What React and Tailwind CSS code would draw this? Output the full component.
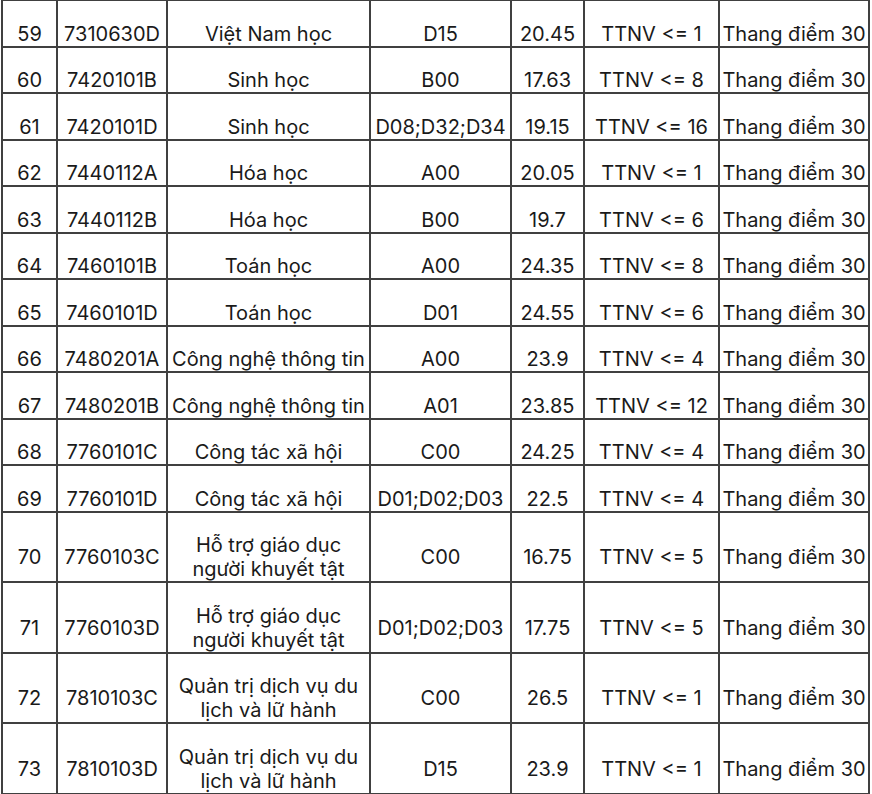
const rows = [
  ['59', '7310630D', ['Việt Nam học'], 'D15', '20.45', 'TTNV <= 1'],
  ['60', '7420101B', ['Sinh học'], 'B00', '17.63', 'TTNV <= 8'],
  ['61', '7420101D', ['Sinh học'], 'D08;D32;D34', '19.15', 'TTNV <= 16'],
  ['62', '7440112A', ['Hóa học'], 'A00', '20.05', 'TTNV <= 1'],
  ['63', '7440112B', ['Hóa học'], 'B00', '19.7', 'TTNV <= 6'],
  ['64', '7460101B', ['Toán học'], 'A00', '24.35', 'TTNV <= 8'],
  ['65', '7460101D', ['Toán học'], 'D01', '24.55', 'TTNV <= 6'],
  ['66', '7480201A', ['Công nghệ thông tin'], 'A00', '23.9', 'TTNV <= 4'],
  ['67', '7480201B', ['Công nghệ thông tin'], 'A01', '23.85', 'TTNV <= 12'],
  ['68', '7760101C', ['Công tác xã hội'], 'C00', '24.25', 'TTNV <= 4'],
  ['69', '7760101D', ['Công tác xã hội'], 'D01;D02;D03', '22.5', 'TTNV <= 4'],
  ['70', '7760103C', ['Hỗ trợ giáo dục', 'người khuyết tật'], 'C00', '16.75', 'TTNV <= 5'],
  ['71', '7760103D', ['Hỗ trợ giáo dục', 'người khuyết tật'], 'D01;D02;D03', '17.75', 'TTNV <= 5'],
  ['72', '7810103C', ['Quản trị dịch vụ du', 'lịch và lữ hành'], 'C00', '26.5', 'TTNV <= 1'],
  ['73', '7810103D', ['Quản trị dịch vụ du', 'lịch và lữ hành'], 'D15', '23.9', 'TTNV <= 1'],
];

const cell = 'border-2 border-[#404040] px-0 pt-[20.5px] pb-0 text-center align-middle whitespace-nowrap';

export default function App() {
  return (
    <div className="h-[794px] w-[872px] overflow-hidden bg-white pl-[1px]">
      <table
        className="-mt-[1px] table-fixed border-collapse text-[20px] leading-[24px] text-[#1a1a1a]"
        style={{ fontFamily: 'Inter, "Noto Sans", sans-serif' }}
      >
        <colgroup>
          <col className="w-[55px]" />
          <col className="w-[110px]" />
          <col className="w-[203px]" />
          <col className="w-[141px]" />
          <col className="w-[73px]" />
          <col className="w-[135px]" />
          <col className="w-[150px]" />
        </colgroup>
        <tbody>
          {rows.map(([no, code, name, combo, score, ttnv]) => (
            <tr key={no}>
              <td className={cell}>{no}</td>
              <td className={cell}>{code}</td>
              <td className={cell}>
                {name.map((line) => (
                  <div key={line}>{line}</div>
                ))}
              </td>
              <td className={cell}>{combo}</td>
              <td className={cell}>{score}</td>
              <td className={cell}>{ttnv}</td>
              <td className={cell}>Thang điểm 30</td>
            </tr>
          ))}
        </tbody>
      </table>
    </div>
  );
}
